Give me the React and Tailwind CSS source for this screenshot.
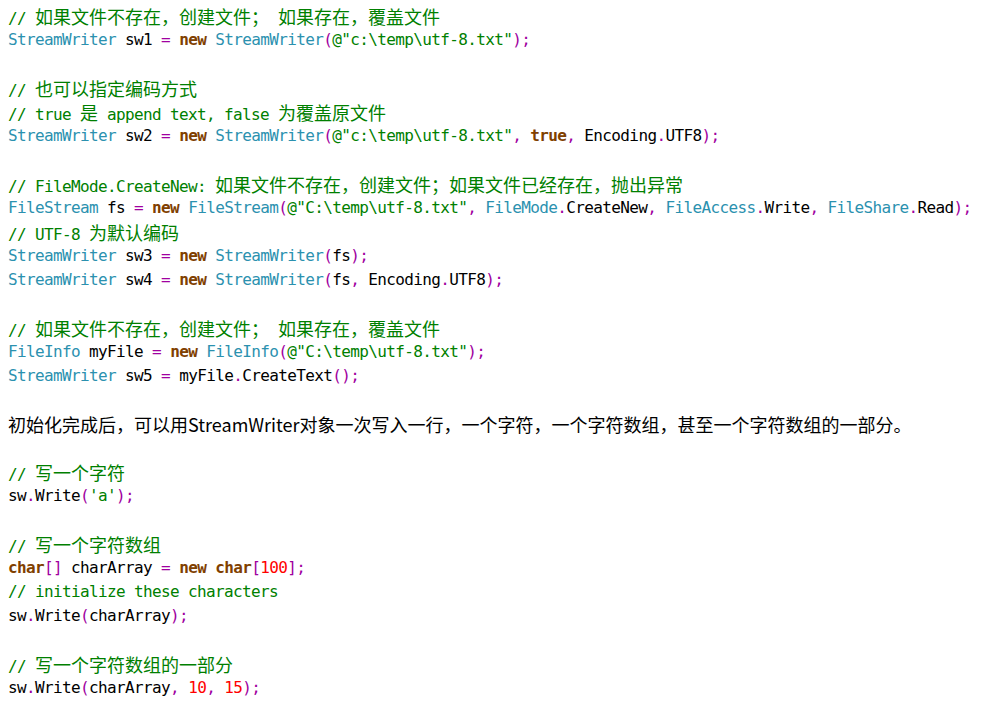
import React from 'react';

const TYPES = new Set(['StreamWriter', 'FileStream', 'FileMode', 'FileAccess', 'FileShare', 'FileInfo']);
const KEYWORDS = new Set(['new', 'true', 'char']);

const CLS = {
  comment: 'text-[#008000]',
  string: 'text-[#008000]',
  type: 'text-[#2b91af]',
  keyword: 'font-bold text-[#804000]',
  op: 'text-[#a000a0]',
  num: 'text-[#ff0000]',
  plain: 'text-black',
};

const CJK = /([\u3000-\u303f\u4e00-\u9fff\uff00-\uffef]+)/;

const overwrite = '// 如果文件不存在，创建文件； 如果存在，覆盖文件';

// C# lines, rendered with a small highlighter
const lines = [
  overwrite,
  'StreamWriter sw1 = new StreamWriter(@"c:\\temp\\utf-8.txt");',
  '',
  '// 也可以指定编码方式',
  '// true 是 append text, false 为覆盖原文件',
  'StreamWriter sw2 = new StreamWriter(@"c:\\temp\\utf-8.txt", true, Encoding.UTF8);',
  '',
  '// FileMode.CreateNew: 如果文件不存在，创建文件；如果文件已经存在，抛出异常',
  'FileStream fs = new FileStream(@"C:\\temp\\utf-8.txt", FileMode.CreateNew, FileAccess.Write, FileShare.Read);',
  '// UTF-8 为默认编码',
  'StreamWriter sw3 = new StreamWriter(fs);',
  'StreamWriter sw4 = new StreamWriter(fs, Encoding.UTF8);',
  '',
  overwrite,
  'FileInfo myFile = new FileInfo(@"C:\\temp\\utf-8.txt");',
  'StreamWriter sw5 = myFile.CreateText();',
  '',
  { prose: '初始化完成后，可以用StreamWriter对象一次写入一行，一个字符，一个字符数组，甚至一个字符数组的一部分。' },
  '',
  '// 写一个字符',
  "sw.Write('a');",
  '',
  '// 写一个字符数组',
  'char[] charArray = new char[100];',
  '// initialize these characters',
  'sw.Write(charArray);',
  '',
  '// 写一个字符数组的一部分',
  'sw.Write(charArray, 10, 15);',
];

function tokenize(line) {
  const re = /(\/\/.*$)|(@?"[^"]*"|'[^']*')|(\b\d+\b)|([A-Za-z_]\w*)|([=(),.;[\]])|(\s+)|(.)/g;
  const out = [];
  let m;
  while ((m = re.exec(line))) {
    if (m[1]) out.push(['comment', m[1]]);
    else if (m[2]) out.push(['string', m[2]]);
    else if (m[3]) out.push(['num', m[3]]);
    else if (m[4]) out.push([TYPES.has(m[4]) ? 'type' : KEYWORDS.has(m[4]) ? 'keyword' : 'plain', m[4]]);
    else if (m[5]) out.push(['op', m[5]]);
    else out.push(['plain', m[0]]);
  }
  return out;
}

function Run({ kind, text }) {
  return text.split(CJK).filter(Boolean).map((part, i) =>
    CJK.test(part) ? (
      <span
        key={i}
        className={`${CLS[kind]} font-['Noto_Sans_CJK_SC',sans-serif] text-[18px] font-normal tracking-normal`}
      >
        {part}
      </span>
    ) : (
      <span key={i} className={CLS[kind]}>
        {part}
      </span>
    )
  );
}

function CodeLine({ text }) {
  return (
    <div className="h-6 whitespace-pre leading-6">
      {tokenize(text).map(([kind, t], i) => (
        <Run key={i} kind={kind} text={t} />
      ))}
    </div>
  );
}

export default function App() {
  return (
    <div className="min-h-[706px] w-[994px] bg-white px-2 pt-1 font-['DejaVu_Sans_Mono',monospace] text-[16px] leading-6 tracking-[-0.63px]">
      {lines.map((line, i) =>
        typeof line === 'string' ? (
          <CodeLine key={i} text={line} />
        ) : (
          <div
            key={i}
            className="h-6 whitespace-pre font-['Noto_Sans_CJK_SC',sans-serif] text-[18px] leading-6 tracking-normal text-black"
          >
            {line.prose}
          </div>
        )
      )}
    </div>
  );
}
